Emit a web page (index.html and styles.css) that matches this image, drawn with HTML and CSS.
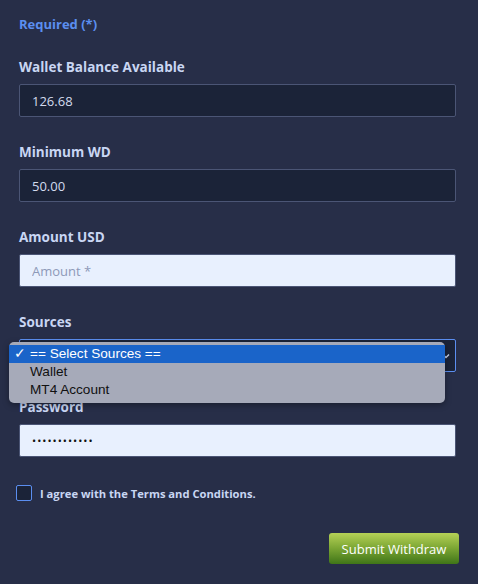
FILE: index.html
```html
<!DOCTYPE html>
<html lang="en">
<head>
    <meta charset="UTF-8">
    <meta name="viewport" content="width=device-width, initial-scale=1.0">
    <title>Withdraw</title>
    <link rel="stylesheet" href="styles.css">
</head>
<body>
    <form class="wdForm">
        <div class="required">Required (*)</div>

        <div class="field">
            <label class="fieldLabel">Wallet Balance Available</label>
            <input class="box dark" type="text" value="126.68" readonly>
        </div>

        <div class="field">
            <label class="fieldLabel">Minimum WD</label>
            <input class="box dark" type="text" value="50.00" readonly>
        </div>

        <div class="field">
            <label class="fieldLabel">Amount USD</label>
            <input class="box light" type="text" placeholder="Amount *">
        </div>

        <div class="field sourceField">
            <label class="fieldLabel">Sources</label>
            <div class="box dark selectBox">
                <span class="chevron">
                    <svg width="8" height="6" viewBox="0 0 8 6"><path d="M1 1.5 L4 4.5 L7 1.5" fill="none" stroke="#c8d3ea" stroke-width="1.4"/></svg>
                </span>
            </div>
            <!-- native popup, opened -->
            <ul class="dropMenu">
                <li class="picked"><span class="tick">✓</span>== Select Sources ==</li>
                <li>Wallet</li>
                <li>MT4 Account</li>
            </ul>
        </div>

        <div class="field">
            <label class="fieldLabel">Password</label>
            <input class="box light pass" type="password" value="abcdefghijkl">
        </div>

        <div class="agree">
            <span class="checkBox"></span>
            <span>I agree with the Terms and Conditions.</span>
        </div>

        <div class="actions">
            <button type="button" class="submitBtn">Submit Withdraw</button>
        </div>
    </form>
</body>
</html>
```

FILE: styles.css
```css
body, html {
    margin: 0;
    padding: 0;
    background-color: #272e48;
    font-family: "Open Sans", "Noto Sans", sans-serif;
}

.wdForm {
    padding: 14px 22px 0 19px;
}

.required {
    font-size: 13px;
    font-weight: 700;
    line-height: 20px;
    color: #5b8ef0;
    margin-bottom: 23px;
}

.field {
    margin-bottom: 25px;
}

.fieldLabel {
    display: block;
    font-size: 13.5px;
    font-weight: 700;
    line-height: 20px;
    color: #c9d6f3;
    margin-bottom: 7px;
}

.box {
    display: block;
    box-sizing: border-box;
    width: 100%;
    height: 33px;
    padding: 0 12px;
    border: 1px solid #4b5575;
    border-radius: 2px;
    font-family: "Open Sans", "Noto Sans", sans-serif;
    font-size: 13px;
    outline: none;
}

.dark {
    background-color: #1b2338;
    color: #d3dbee;
}

.light {
    background-color: #e8f0fe;
    color: #111;
}

.light::placeholder {
    color: #8d99b8;
}

.pass {
    font-size: 11px;
    letter-spacing: 1px;
}

.sourceField {
    position: relative;
}

.selectBox {
    border-color: #5b8ef0;
    display: flex;
    justify-content: flex-end;
    align-items: center;
    padding-right: 5px;
}

.chevron {
    display: flex;
}

.dropMenu {
    position: absolute;
    left: -10px;
    top: 30px;
    width: 436px;
    margin: 0;
    padding: 3px 0 4px;
    list-style: none;
    background-color: #a6aab9;
    border-radius: 5px;
    box-shadow: 0 2px 6px rgba(0, 0, 0, 0.35);
    font-family: "Liberation Sans", Arial, sans-serif;
    font-size: 13.6px;
    color: #111;
    z-index: 10;
}

.dropMenu li {
    height: 18px;
    line-height: 18px;
    padding-left: 21px;
    position: relative;
}

.dropMenu li.picked {
    background-color: #1a64c9;
    color: #fff;
}

.tick {
    position: absolute;
    left: 5px;
}

.agree {
    display: flex;
    align-items: center;
    gap: 8px;
    margin-left: -3px;
    margin-top: 28px;
    font-size: 11.2px;
    font-weight: 700;
    color: #c9d6f3;
}

.checkBox {
    box-sizing: border-box;
    width: 16px;
    height: 16px;
    border: 1px solid #5b8ef0;
    border-radius: 2px;
    background-color: #1b2338;
}

.actions {
    display: flex;
    justify-content: flex-end;
    margin-top: 32px;
    margin-right: -3px;
}

.submitBtn {
    width: 130px;
    height: 31px;
    border: none;
    border-radius: 3px;
    background: linear-gradient(#b5d156, #7aa533 50%, #3f7518);
    color: #fff;
    font-family: "Open Sans", "Noto Sans", sans-serif;
    font-size: 13px;
    cursor: pointer;
}
```
